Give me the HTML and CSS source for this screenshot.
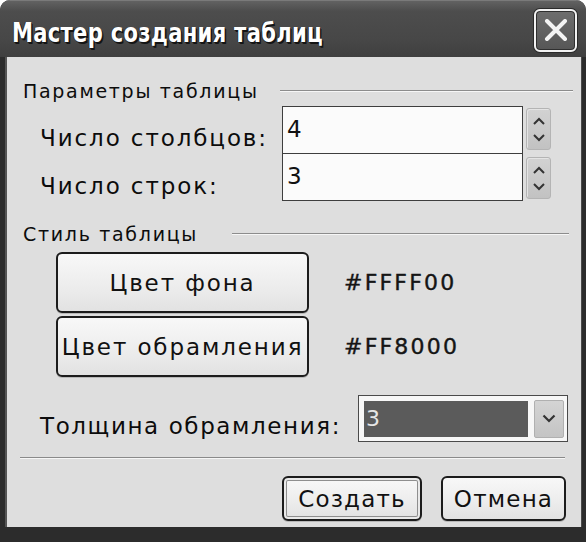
FILE: index.html
```html
<!DOCTYPE html>
<html lang="ru">
<head>
<meta charset="utf-8">
<title>Мастер создания таблиц</title>
<link rel="stylesheet" href="styles.css">
</head>
<body>
<div class="window">
  <div class="titlebar">
    <span class="title">Мастер создания таблиц</span>
    <button class="close" aria-label="Закрыть">
      <svg width="24" height="22" viewBox="0 0 24 22"><path d="M3 2 L21 20 M21 2 L3 20" stroke="#f4f4f4" stroke-width="4" stroke-linecap="round" fill="none"/></svg>
    </button>
  </div>
  <div class="frame">
    <div class="content">
      <div class="group-head params">
        <span class="group-title">Параметры таблицы</span>
        <span class="rule"></span>
      </div>

      <div class="spin-grid">
        <span class="field-label">Число столбцов:</span>
        <div class="spin-inputs">
          <div class="spin-value first">4</div>
          <div class="spin-value">3</div>
        </div>
        <div class="spin-buttons">
          <div class="spinner">
            <svg width="12" height="8" viewBox="0 0 12 8"><path d="M1 7 L6 2 L11 7" stroke="#333" stroke-width="2" fill="none"/></svg>
            <svg width="12" height="8" viewBox="0 0 12 8"><path d="M1 1 L6 6 L11 1" stroke="#333" stroke-width="2" fill="none"/></svg>
          </div>
          <div class="spinner second">
            <svg width="12" height="8" viewBox="0 0 12 8"><path d="M1 7 L6 2 L11 7" stroke="#333" stroke-width="2" fill="none"/></svg>
            <svg width="12" height="8" viewBox="0 0 12 8"><path d="M1 1 L6 6 L11 1" stroke="#333" stroke-width="2" fill="none"/></svg>
          </div>
        </div>
        <span class="field-label second-label">Число строк:</span>
      </div>

      <div class="group-head style">
        <span class="group-title">Стиль таблицы</span>
        <span class="rule"></span>
      </div>

      <div class="color-grid">
        <button class="btn color-btn">Цвет фона</button>
        <span class="hex">#FFFF00</span>
        <button class="btn color-btn">Цвет обрамления</button>
        <span class="hex">#FF8000</span>
      </div>

      <div class="thick-row">
        <span class="field-label">Толщина обрамления:</span>
        <div class="select">
          <div class="select-field">3</div>
          <div class="select-btn">
            <svg width="14" height="9" viewBox="0 0 14 9"><path d="M1.5 1.5 L7 7 L12.5 1.5" stroke="#333" stroke-width="2.2" fill="none"/></svg>
          </div>
        </div>
      </div>

      <div class="separator"></div>

      <div class="actions">
        <button class="btn action default">Создать</button>
        <button class="btn action">Отмена</button>
      </div>
    </div>
  </div>
</div>
</body>
</html>
```

FILE: styles.css
```css
* { box-sizing: border-box; }

html, body {
  margin: 0;
  padding: 0;
  background: #ffffff;
}

body {
  width: 586px;
  height: 542px;
  overflow: hidden;
  font-family: "DejaVu Sans", "Noto Sans", sans-serif;
  color: #0c0c0c;
}

.window {
  width: 586px;
  height: 542px;
  display: flex;
  flex-direction: column;
  border-radius: 10px 10px 0 0;
  overflow: hidden;
  background: #2b2b2b;
}

.titlebar {
  height: 57px;
  flex: none;
  display: flex;
  align-items: center;
  justify-content: space-between;
  padding: 0 9px 0 12px;
  background: linear-gradient(#626262, #4d4d4d 18%, #474747 70%, #3f3f3f);
  border-top: 1px solid #7a7a7a;
}

.title {
  display: inline-block;
  font-family: "DejaVu Sans", sans-serif;
  font-weight: bold;
  font-size: 27px;
  letter-spacing: 0.4px;
  color: #ffffff;
  text-shadow: 2px 2px 0 #141414, 1px 1px 0 #141414, -1px 0 0 #2a2a2a;
  margin-top: 7px;
  white-space: nowrap;
  transform: scaleX(0.78);
  transform-origin: left center;
}

.close {
  width: 43px;
  height: 43px;
  padding: 0;
  margin-top: 2px;
  border: 2px solid #f2f2f2;
  border-radius: 6px;
  background: linear-gradient(#6e6e6e, #565656);
  box-shadow: 0 0 0 1px #2a2a2a, inset 0 0 0 1px #2f2f2f;
  display: flex;
  align-items: center;
  justify-content: center;
}

.frame {
  flex: 1;
  display: flex;
  padding: 0 8px 15px 7px;
  background: #2c2c2c;
}

.content {
  flex: 1;
  display: flex;
  flex-direction: column;
  background: #dedede;
  padding: 0 13px 0 16px;
  box-shadow: -2px 0 0 #555, 1px 0 0 #4a4a4a;
}

/* group headers */
.group-head {
  display: flex;
  align-items: center;
  height: 22px;
}
.group-title {
  font-size: 19px;
  line-height: 22px;
  letter-spacing: 1.7px;
  white-space: nowrap;
}
.rule {
  flex: 1;
  height: 2px;
  border-top: 1px solid #8c8c8c;
  border-bottom: 1px solid #f6f6f6;
}
.group-head.params { margin-top: 23px; }
.group-head.params .rule { margin-left: 21px; margin-right: -5px; }
.group-head.style { margin-top: 22px; }
.group-head.style .rule { margin-left: 34px; margin-right: -1px; }

.field-label {
  font-size: 23px;
  line-height: 26px;
  letter-spacing: 1.9px;
  white-space: nowrap;
}

/* spin inputs */
.spin-grid {
  margin-top: 4px;
  display: grid;
  grid-template-columns: 239px 241px 26px;
  grid-template-rows: 48px 47px;
  column-gap: 3px;
  padding-left: 17px;
}
.spin-grid .field-label {
  grid-column: 1;
  grid-row: 1;
  padding-top: 19px;
}
.spin-grid .second-label {
  grid-row: 2;
  padding-top: 19px;
}
.spin-inputs {
  grid-column: 2;
  grid-row: 1 / 3;
  border: 1px solid #3e3e3e;
  background: #fbfbfb;
  display: flex;
  flex-direction: column;
}
.spin-value {
  flex: 1;
  font-size: 23px;
  line-height: 26px;
  padding: 9px 0 0 4px;
  color: #111;
}
.spin-value.first {
  border-bottom: 1px solid #3e3e3e;
  flex: none;
  height: 47px;
}
.spin-buttons {
  grid-column: 3;
  grid-row: 1 / 3;
  display: flex;
  flex-direction: column;
  padding-top: 2px;
  gap: 7px;
}
.spinner {
  height: 42px;
  width: 25px;
  border-radius: 3px;
  border: 1px solid #b4b4b4;
  background: linear-gradient(#d2d2d2, #c2c2c2);
  box-shadow: inset 1px 1px 0 #e4e4e4;
  display: flex;
  flex-direction: column;
  align-items: center;
  justify-content: space-between;
  padding: 8px 0 7px;
}

/* colour buttons */
.btn {
  font-family: "DejaVu Sans", "Noto Sans", sans-serif;
  color: #111;
  background: linear-gradient(#f8f8f8, #ececec 60%, #e2e2e2);
  border: 2px solid #1c1c1c;
  border-radius: 6px;
  padding: 0;
  box-shadow: 0 1px 0 #b8b8b8;
}
.color-grid {
  margin-top: 7px;
  display: grid;
  grid-template-columns: 253px auto;
  grid-template-rows: 61px 61px;
  row-gap: 3px;
  column-gap: 35px;
  align-items: center;
  padding-left: 33px;
}
.color-btn {
  height: 100%;
  font-size: 23px;
  letter-spacing: 1.9px;
}
.hex {
  font-size: 22px;
  letter-spacing: 2.2px;
  color: #151515;
  -webkit-text-stroke: 0.4px #151515;
}

/* thickness */
.thick-row {
  margin-top: 18px;
  display: flex;
  align-items: center;
  padding-left: 17px;
  height: 47px;
}
.thick-row .field-label {
  width: 318px;
  padding-top: 14px;
  letter-spacing: 1.6px;
}
.select {
  width: 210px;
  height: 47px;
  border: 1px solid #4a4a4a;
  background: #f7f7f7;
  display: flex;
  align-items: center;
  padding: 0 3px 0 5px;
  gap: 6px;
}
.select-field {
  flex: 1;
  height: 36px;
  background: #5b5b5b;
  color: #e6e6e6;
  font-size: 22px;
  line-height: 36px;
  padding-left: 2px;
}
.select-btn {
  width: 30px;
  height: 38px;
  border-radius: 2px;
  border: 1px solid #b0b0b0;
  background: linear-gradient(#d4d4d4, #c4c4c4);
  display: flex;
  align-items: center;
  justify-content: center;
}

.separator {
  margin: 15px 3px 0 -3px;
  height: 2px;
  border-top: 1px solid #8a8a8a;
  border-bottom: 1px solid #f6f6f6;
}

.actions {
  margin-top: 17px;
  display: flex;
  justify-content: flex-end;
  gap: 19px;
  padding-right: 2px;
}
.action {
  height: 45px;
  font-size: 23px;
  letter-spacing: 1.2px;
}
.action.default {
  width: 140px;
  box-shadow: inset 0 0 0 2px #e9e9e9, inset 0 0 0 3px #8e8e8e, 0 1px 0 #b8b8b8;
}
.action:not(.default) {
  width: 125px;
}
```
